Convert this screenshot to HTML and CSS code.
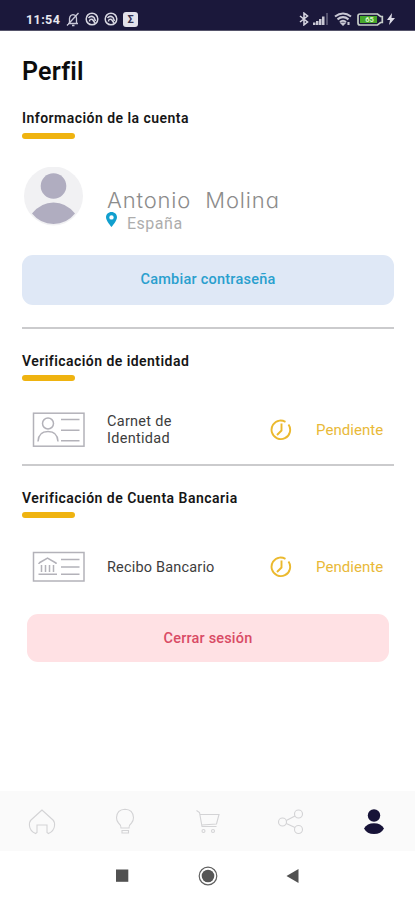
FILE: index.html
```html
<!DOCTYPE html>
<html lang="es">
<head>
<meta charset="utf-8">
<title>Perfil</title>
<link rel="stylesheet" href="styles.css">
</head>
<body>
<div class="phone">
  <header class="status">
    <span class="time">11:54</span>
    <svg class="ic-bell" width="14" height="15" viewBox="0 0 14 15" fill="none" stroke="#c9c8d8" stroke-width="1.3"><path d="M2 11.5h10M3.5 11V6.500Q4 3 7 2.700Q10.500 3 10.500 6.500V11M6 13.500h2.500M1 13.500L12.500 1"/></svg>
    <svg class="ic-dot" width="14" height="14" viewBox="0 0 14 14" fill="none" stroke="#d8d7e2" stroke-width="1.5"><circle cx="7" cy="7" r="5.800"/><path d="M3.500 6Q6 3 9 5.500L10.500 9M4.500 9.500Q4.500 6.500 7.500 7.500L10 11" /></svg>
    <svg class="ic-dot" width="14" height="14" viewBox="0 0 14 14" fill="none" stroke="#d8d7e2" stroke-width="1.5"><circle cx="7" cy="7" r="5.800"/><path d="M3.500 6Q6 3 9 5.500L10.500 9M4.500 9.500Q4.500 6.500 7.500 7.500L10 11" /></svg>
    <span class="sigma">Σ</span>
    <span class="spacer"></span>
    <svg class="ic-bt" width="10" height="14" viewBox="0 0 10 14" fill="none" stroke="#d4d3df" stroke-width="1.6"><path d="M1 4l7.500 6L5 12.800V1.200L8.500 4 1 10"/></svg>
    <svg class="ic-signal" width="16" height="12" viewBox="0 0 16 12" fill="#c9c8d4"><path d="M0 9.500h2.500V12H0zM3 8h2.500v4H3zM6 6h2.500v6H6zM9 3.500h2.500V12H9z"/><path d="M13 0h2v12h-2z" fill="#53516d"/></svg>
    <svg class="ic-wifi" width="18" height="14" viewBox="0 0 18 14" fill="none" stroke="#c9c8d4" stroke-width="2.100"><path d="M1 4.500Q9-1.500 17 4.500M3.500 7.300Q9 3 14.500 7.300M6 10Q9 7.500 12 10"/><path d="M8 11.500L9 12.500l1-1zM14.500 10v3" /></svg>
    <svg class="ic-batt" width="27" height="13" viewBox="0 0 27 13"><path d="M3 1h17.500l3 2.500h1.800v6h-1.800l-3 2.500H3q-2 0-2-2V3q0-2 2-2z" fill="#1b183b" stroke="#c7cec9" stroke-width="1.700"/><rect x="3" y="3" width="17" height="7" fill="#46a82b"/><text x="12.500" y="9.400" class="level">65</text></svg>
    <svg class="ic-bolt" width="8" height="12" viewBox="0 0 8 12" fill="#dcdbe6"><path d="M5 0L0 7h3L2 12l6-7H4.500z"/></svg>
  </header>

  <main class="content">
    <h1 class="title">Perfil</h1>

    <section class="account">
      <h2 class="heading h-account">Información de la cuenta</h2>
      <div class="accent"></div>
      <div class="profile">
        <svg class="avatar" width="60" height="60" viewBox="0 0 60 60"><circle cx="29.500" cy="29" r="29.500" fill="#f1f1f3"/><circle cx="29.500" cy="19" r="12.800" fill="#b0adc0"/><path d="M8 46.500Q17 35.500 29.500 35.500T51 46.500Q42.500 57 29.500 57T8 46.500z" fill="#b0adc0"/></svg>
        <div class="who">
          <div class="name">Antonio&nbsp; Molina</div>
          <div class="place">
            <svg width="11" height="15" viewBox="0 0 11 15"><path fill-rule="evenodd" d="M5.500 0C2.300 0 0 2.300 0 5.300 0 9 5.500 15 5.500 15S11 9 11 5.300C11 2.300 8.700 0 5.500 0zm0 3.200a2.200 2.200 0 1 1 0 4.400 2.200 2.200 0 0 1 0-4.400z" fill="#119fce"/></svg>
            <span>España</span>
          </div>
        </div>
      </div>
      <button class="btn change"><span>Cambiar contraseña</span></button>
    </section>

    <section class="verify identity">
      <h2 class="heading h-identity">Verificación de identidad</h2>
      <div class="accent"></div>
      <div class="row">
        <svg class="doc" width="54" height="36" viewBox="0 0 54 36" fill="none" stroke="#b3b2b9" stroke-width="1.500"><rect x="1.500" y="1.200" width="50.500" height="33"/><circle cx="16" cy="11.500" r="5.500"/><path d="M6 29.500Q6.500 19.500 16 19.500T26 29.500M29 7.500h18.500M29 18.200h18.500M29 28.800h18.500"/></svg>
        <span class="label l-id">Carnet de<br>Identidad</span>
        <svg class="clock" width="22" height="22" viewBox="0 0 22 22" fill="none" stroke="#ebb92e" stroke-width="1.900"><path d="M15.500 2.800Q12.500 1.300 9.500 1.600A9.300 9.300 0 1 0 18.500 5.500M11.500 4.500v7L7 16"/></svg>
        <span class="state">Pendiente</span>
      </div>
    </section>

    <section class="verify bank">
      <h2 class="heading h-bank">Verificación de Cuenta Bancaria</h2>
      <div class="accent"></div>
      <div class="row">
        <svg class="doc" width="54" height="32" viewBox="0 0 54 32" fill="none" stroke="#b3b2b9" stroke-width="1.500"><rect x="1.500" y="1.500" width="50.500" height="28.500"/><path d="M7 12l8.500-5 8.500 5v1M7 12v1M9.500 14v7M13.500 14v7M17.500 14v7M21.500 14v7M6.500 23.300h18.500M29 8.500h18.500M29 16h18.500M29 23.300h18.500"/></svg>
        <span class="label l-bank">Recibo Bancario</span>
        <svg class="clock" width="22" height="22" viewBox="0 0 22 22" fill="none" stroke="#ebb92e" stroke-width="1.900"><path d="M15.500 2.800Q12.500 1.300 9.500 1.600A9.300 9.300 0 1 0 18.500 5.500M11.500 4.500v7L7 16"/></svg>
        <span class="state">Pendiente</span>
      </div>
    </section>

    <button class="btn logout"><span>Cerrar sesión</span></button>
  </main>

  <nav class="tabs">
    <svg width="28" height="28" viewBox="0 0 28 28"><path d="M14 2L3 12Q1 14 1.500 18Q2 23 7.500 25.500L9 24.500V17h10v7.500l1.500 1Q26 23 26.500 18Q27 14 25 12z"/></svg>
    <svg width="28" height="28" viewBox="0 0 28 28"><path d="M10 20Q10 17 7.500 15Q5.500 13 5.500 9.500Q6 1.500 14 1.200Q22 1.500 22.500 9.500Q22.500 13 20.500 15Q18 17 18 20zM11 22.500h6.500v2.500H11z"/></svg>
    <svg width="28" height="28" viewBox="0 0 28 28"><path d="M2.500 2.500l3 2L8 18.500h14.500M6 6.500h19L22.500 16l-15 1"/><circle cx="9.500" cy="23" r="1.500"/><circle cx="19" cy="23" r="1.500"/></svg>
    <svg width="28" height="28" viewBox="0 0 28 28"><circle cx="5.500" cy="14" r="4"/><circle cx="21.500" cy="6" r="4"/><circle cx="21.500" cy="21.500" r="4"/><path d="M9.300 12.500l8.700-4.500M9.300 15.500l8.700 4"/></svg>
    <svg class="active" width="28" height="28" viewBox="0 0 28 28"><circle cx="14" cy="7.500" r="6.200"/><path d="M4 20.500Q7 15.300 14 15.300T24 20.500Q21 26 14 26T4 20.500z"/></svg>
  </nav>
  <footer class="system">
    <svg width="20" height="20" viewBox="0 0 20 20"><rect x="4" y="3.500" width="12.300" height="12.300" fill="#515151"/></svg>
    <svg width="20" height="20" viewBox="0 0 20 20"><circle cx="10" cy="10" r="8.800" fill="none" stroke="#606060" stroke-width="1.200"/><circle cx="10" cy="10" r="6.300" fill="#565656"/></svg>
    <svg width="20" height="20" viewBox="0 0 20 20"><path d="M3.500 10L15.500 3v14z" fill="#515151"/></svg>
  </footer>
</div>
</body>
</html>
```
FILE: styles.css
```css
* { box-sizing: border-box; }
body { margin: 0; background: #fff; font-family: Roboto, "Liberation Sans", sans-serif; }
svg { display: block; flex: none; }
h1, h2 { margin: 0; }
.phone { width: 415px; height: 900px; display: flex; flex-direction: column; overflow: hidden; background: #fff; }

.status { height: 31px; flex: none; display: flex; align-items: center; padding: 8px 20px 0 26px; background: #1b183b; border-bottom: 1px solid #55536a; }
.time { width: 40px; font-size: 12.5px; font-weight: 700; letter-spacing: .4px; color: #e9e8f0; }
.ic-dot { margin-left: 5px; }
.sigma { width: 15px; height: 15px; margin-left: 5px; border-radius: 3px; background: #e2e1ea; color: #343152; font-size: 11px; font-weight: 700; line-height: 15px; text-align: center; }
.spacer { flex: 1; }
.ic-signal { margin-left: 4px; }
.ic-wifi { margin-left: 5px; }
.ic-batt { margin-left: 5px; }
.ic-bolt { margin-left: 3px; }
.level { font-size: 7.5px; font-weight: 700; fill: #d9f6c8; text-anchor: middle; }

.content { flex: 1; display: flex; flex-direction: column; padding: 0 21px 0 22px; }
.title { height: 78px; padding-top: 25px; font-size: 25px; line-height: 31px; font-weight: 600; letter-spacing: .2px; color: #0c0c0c; white-space: nowrap; }
.heading { height: 18px; font-size: 14px; line-height: 18px; font-weight: 600; color: #161616; white-space: nowrap; }
.h-account { letter-spacing: .46px; }
.h-identity { letter-spacing: .45px; }
.h-bank { letter-spacing: .48px; }
.accent { width: 53px; height: 5.5px; margin-top: 6px; border-radius: 3px; background: #efb310; }
.verify .accent { margin-top: 5px; }

.profile { display: flex; height: 116px; padding-top: 28px; padding-left: 2px; }
.who { margin-left: 22px; padding-top: 19px; }
.name { height: 26px; padding-left: 1px; font-family: Inter, sans-serif; font-feature-settings: "cv11"; font-weight: 300; font-size: 22px; line-height: 29px; letter-spacing: .85px; color: #8c8c8c; white-space: nowrap; }
.place { display: flex; height: 20px; gap: 10px; font-size: 16px; line-height: 23px; letter-spacing: .5px; color: #adadad; }

.btn { display: flex; align-items: center; justify-content: center; width: 372px; height: 50px; padding: 1px 0 0; border: 0; border-radius: 11px; font: 500 14.5px/20px Roboto, sans-serif; white-space: nowrap; }
.change { letter-spacing: .24px; background: #dfe8f6; color: #2a9fce; }
.logout { width: 362px; height: 48px; margin-left: 5px; letter-spacing: .18px; background: #ffe1e4; color: #d94b65; }

.verify { height: 137px; border-top: 2px solid #cbcbcd; padding-top: 23px; }
.identity { margin-top: 22.5px; }
.bank { height: 150px; }
.row { display: flex; align-items: center; height: 60px; margin-top: 19px; padding-left: 10px; }
.label { width: 140px; margin-left: 21px; padding-top: 1px; font-size: 14.5px; line-height: 17.5px; letter-spacing: .18px; color: #3d3d3d; white-space: nowrap; }
.l-id { letter-spacing: .28px; }
.l-bank { padding-top: 2px; }
.clock { margin-left: 23px; }
.state { margin-left: 24px; padding-top: 1px; font-size: 15px; line-height: 20px; letter-spacing: .05px; color: #e9b938; white-space: nowrap; }

.tabs { height: 60px; flex: none; display: flex; align-items: center; justify-content: space-between; padding: 1px 27px 0 28px; background: #fafafa; }
.tabs svg { fill: none; stroke: #d3d3d5; stroke-width: 1.1; }
.tabs .active { fill: #171338; stroke: none; }
.system { height: 49px; flex: none; display: flex; align-items: center; gap: 65.5px; padding-left: 112px; }
```
